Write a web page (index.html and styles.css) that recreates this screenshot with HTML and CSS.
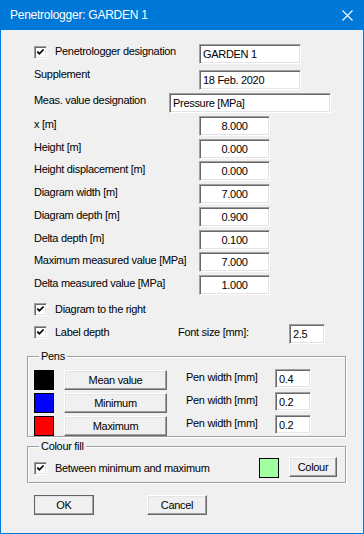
FILE: index.html
```html
<!DOCTYPE html>
<html lang="en">
<head>
    <meta charset="UTF-8">
    <meta name="viewport" content="width=device-width, initial-scale=1.0">
    <title>Penetrologger: GARDEN 1</title>
    <link rel="stylesheet" href="styles.css">
</head>
<body>
    <div class="window">
        <div class="titlebar">
            <span class="title">Penetrologger: GARDEN 1</span>
            <svg class="close" width="11" height="11" viewBox="0 0 11 11">
                <path d="M0.5 0.5 L10.5 10.5 M10.5 0.5 L0.5 10.5" stroke="#fff" stroke-width="1.1" fill="none"/>
            </svg>
        </div>

        <div class="dialog">
            <div class="row">
                <div class="check check-desig">
                    <span class="box"><svg width="9" height="9" viewBox="0 0 9 9"><path d="M1.3 3.6 L3.4 5.7 L7.6 1.5" stroke="#000" stroke-width="1.7" fill="none"/></svg></span>
                    <span class="check-text">Penetrologger designation</span>
                </div>
                <div class="field text wide">GARDEN 1</div>
            </div>
            <div class="row supplement">
                <div class="label up">Supplement</div>
                <div class="field text wide">18 Feb. 2020</div>
            </div>
            <div class="row">
                <div class="label short">Meas. value designation</div>
                <div class="field text long">Pressure [MPa]</div>
            </div>
            <div class="row">
                <div class="label">x [m]</div>
                <div class="field num">8.000</div>
            </div>
            <div class="row">
                <div class="label">Height [m]</div>
                <div class="field num">0.000</div>
            </div>
            <div class="row tight">
                <div class="label">Height displacement [m]</div>
                <div class="field num">0.000</div>
            </div>
            <div class="row">
                <div class="label">Diagram width [m]</div>
                <div class="field num">7.000</div>
            </div>
            <div class="row">
                <div class="label">Diagram depth [m]</div>
                <div class="field num">0.900</div>
            </div>
            <div class="row">
                <div class="label">Delta depth [m]</div>
                <div class="field num">0.100</div>
            </div>
            <div class="row tight">
                <div class="label">Maximum measured value [MPa]</div>
                <div class="field num">7.000</div>
            </div>
            <div class="row">
                <div class="label">Delta measured value [MPa]</div>
                <div class="field num">1.000</div>
            </div>

            <div class="row check-row">
                <div class="check">
                    <span class="box"><svg width="9" height="9" viewBox="0 0 9 9"><path d="M1.3 3.6 L3.4 5.7 L7.6 1.5" stroke="#000" stroke-width="1.7" fill="none"/></svg></span>
                    <span class="check-text">Diagram to the right</span>
                </div>
            </div>
            <div class="row depth-row">
                <div class="check check-depth">
                    <span class="box"><svg width="9" height="9" viewBox="0 0 9 9"><path d="M1.3 3.6 L3.4 5.7 L7.6 1.5" stroke="#000" stroke-width="1.7" fill="none"/></svg></span>
                    <span class="check-text">Label depth</span>
                </div>
                <div class="label font-label">Font size [mm]:</div>
                <div class="field text small">2.5</div>
            </div>

            <fieldset class="group pens">
                <legend>Pens</legend>
                <div class="pen-row">
                    <span class="swatch black"></span>
                    <div class="button pen-button">Mean value</div>
                    <div class="label pen-label">Pen width [mm]</div>
                    <div class="field text small">0.4</div>
                </div>
                <div class="pen-row">
                    <span class="swatch blue"></span>
                    <div class="button pen-button">Minimum</div>
                    <div class="label pen-label">Pen width [mm]</div>
                    <div class="field text small">0.2</div>
                </div>
                <div class="pen-row">
                    <span class="swatch red"></span>
                    <div class="button pen-button">Maximum</div>
                    <div class="label pen-label">Pen width [mm]</div>
                    <div class="field text small">0.2</div>
                </div>
            </fieldset>

            <fieldset class="group fill">
                <legend>Colour fill</legend>
                <div class="fill-row">
                    <div class="check check-fill">
                        <span class="box"><svg width="9" height="9" viewBox="0 0 9 9"><path d="M1.3 3.6 L3.4 5.7 L7.6 1.5" stroke="#000" stroke-width="1.7" fill="none"/></svg></span>
                        <span class="check-text">Between minimum and maximum</span>
                    </div>
                    <span class="swatch green"></span>
                    <div class="button colour-button">Colour</div>
                </div>
            </fieldset>

            <div class="actions">
                <div class="button default">OK</div>
                <div class="button cancel">Cancel</div>
            </div>
        </div>
    </div>
</body>
</html>
```

FILE: styles.css
```css
* {
    box-sizing: border-box;
}

body {
    margin: 0;
    font-family: "Liberation Sans", Arial, sans-serif;
    font-size: 11px;
    line-height: 13px;
    letter-spacing: -0.3px;
    color: #000;
    background-color: #fff;
}

.window {
    width: 364px;
    height: 534px;
    background-color: #f0f0f0;
    border: 1px solid #0078d7; /* Accent blue frame */
    border-top: none;
}

.titlebar {
    height: 30px;
    background-color: #0078d7;
    color: #fff;
    display: flex;
    align-items: center;
    justify-content: space-between;
    padding: 0 10px 0 9px;
}

.title {
    font-size: 12px;
    letter-spacing: -0.25px;
}

.close {
    display: block;
}

.dialog {
    padding: 14px 0 0 26px;
}

/* form rows */
.row {
    display: flex;
    align-items: flex-start;
    height: 20px;
    margin-left: 7px;
    margin-top: 3px;
}

.row:first-child {
    margin-top: 0;
}

.row.supplement {
    margin-top: 6px;
}

.row.tight {
    margin-top: 2px;
}

.label {
    width: 165px;
    padding-top: 2px;
    white-space: nowrap;
}

.label.up {
    margin-top: -2px;
    padding-top: 0;
}

.label.short {
    width: 135px;
    padding-top: 1px;
}

/* sunken edit boxes */
.field {
    height: 20px;
    background-color: #fff;
    border: 1px solid;
    border-color: #a0a0a0 #fff #fff #a0a0a0;
    box-shadow: inset 1px 1px #696969, inset -1px -1px #e3e3e3;
    line-height: 16px;
    padding: 1px 3px;
    white-space: nowrap;
    overflow: hidden;
}

.field.num {
    width: 71px;
    text-align: center;
}

.field.wide {
    width: 102px;
}

.field.long {
    width: 162px;
}

.field.small {
    width: 36px;
}

/* checkboxes */
.check {
    display: flex;
    align-items: flex-start;
    width: 165px;
}

.box {
    width: 13px;
    height: 13px;
    margin-top: 2px;
    padding: 2px;
    background-color: #fff;
    border: 1px solid;
    border-color: #a0a0a0 #fff #fff #a0a0a0;
    box-shadow: inset 1px 1px #696969, inset -1px -1px #e3e3e3;
}

.box svg {
    display: block;
    margin: -1px 0 0 -1px;
}

.check-text {
    margin-left: 8px;
    padding-top: 1px;
    white-space: nowrap;
}

.row.check-row {
    margin-top: 8px;
    height: 14px;
}

.check-row .box {
    margin-top: 0;
}

.check-row .check-text {
    padding-top: 0;
}

.row.depth-row {
    margin-top: 7px;
}

.check-depth {
    width: 144px;
}

.check-depth .check-text {
    padding-top: 2px;
}

.font-label {
    width: 111px;
}

/* group boxes */
.group {
    width: 319px;
    margin: 6px 0 0 0;
    padding: 6px 8px 0 6px;
    border: 1px solid #a0a0a0;
    box-shadow: 1px 1px #fff, inset 1px 1px #fff;
    min-width: 0;
}

.group legend {
    margin-left: 5px;
    padding: 0 2px;
    line-height: 13px;
    background-color: #f0f0f0;
}

.group.fill {
    margin-top: 3px;
    padding: 4px 8px 5px 6px;
}

.pen-row {
    display: flex;
    align-items: flex-start;
    height: 21px;
}

.pen-row + .pen-row {
    margin-top: 2px;
}

.swatch {
    width: 20px;
    height: 20px;
    margin-top: 1px;
    border: 1px solid #000;
}

.swatch.black { background-color: #000; }
.swatch.blue { background-color: #0000ff; }
.swatch.red { background-color: #ff0000; }
.swatch.green { background-color: #a0ffa0; }

.pen-label {
    width: 89px;
    margin-left: 19px;
}

.pen-row .field {
    height: 19px;
}

/* raised buttons */
.button {
    height: 20px;
    background-color: #f0f0f0;
    border: 1px solid;
    border-color: #fff #696969 #696969 #fff;
    box-shadow: inset -1px -1px #a0a0a0, inset 1px 1px #e3e3e3;
    line-height: 18px;
    text-align: center;
    white-space: nowrap;
}

.pen-button {
    width: 103px;
    margin-left: 10px;
    margin-top: 1px;
}

.fill-row {
    display: flex;
    align-items: flex-start;
    height: 20px;
}

.check-fill {
    width: auto;
}

.check-fill .box {
    margin-top: 5px;
}

.check-fill .check-text {
    padding-top: 5px;
}

.fill-row .swatch {
    margin-left: auto;
    height: 20px;
}

.colour-button {
    width: 48px;
    margin-left: 10px;
}

.actions {
    display: flex;
    margin: 12px 0 0 7px;
}

.actions .button {
    width: 60px;
}

.button.default {
    border-color: #fff #646464 #646464 #fff;
    outline: 1px solid #646464;
    outline-offset: -1px;
}

.button.cancel {
    margin-left: 53px;
}
```
